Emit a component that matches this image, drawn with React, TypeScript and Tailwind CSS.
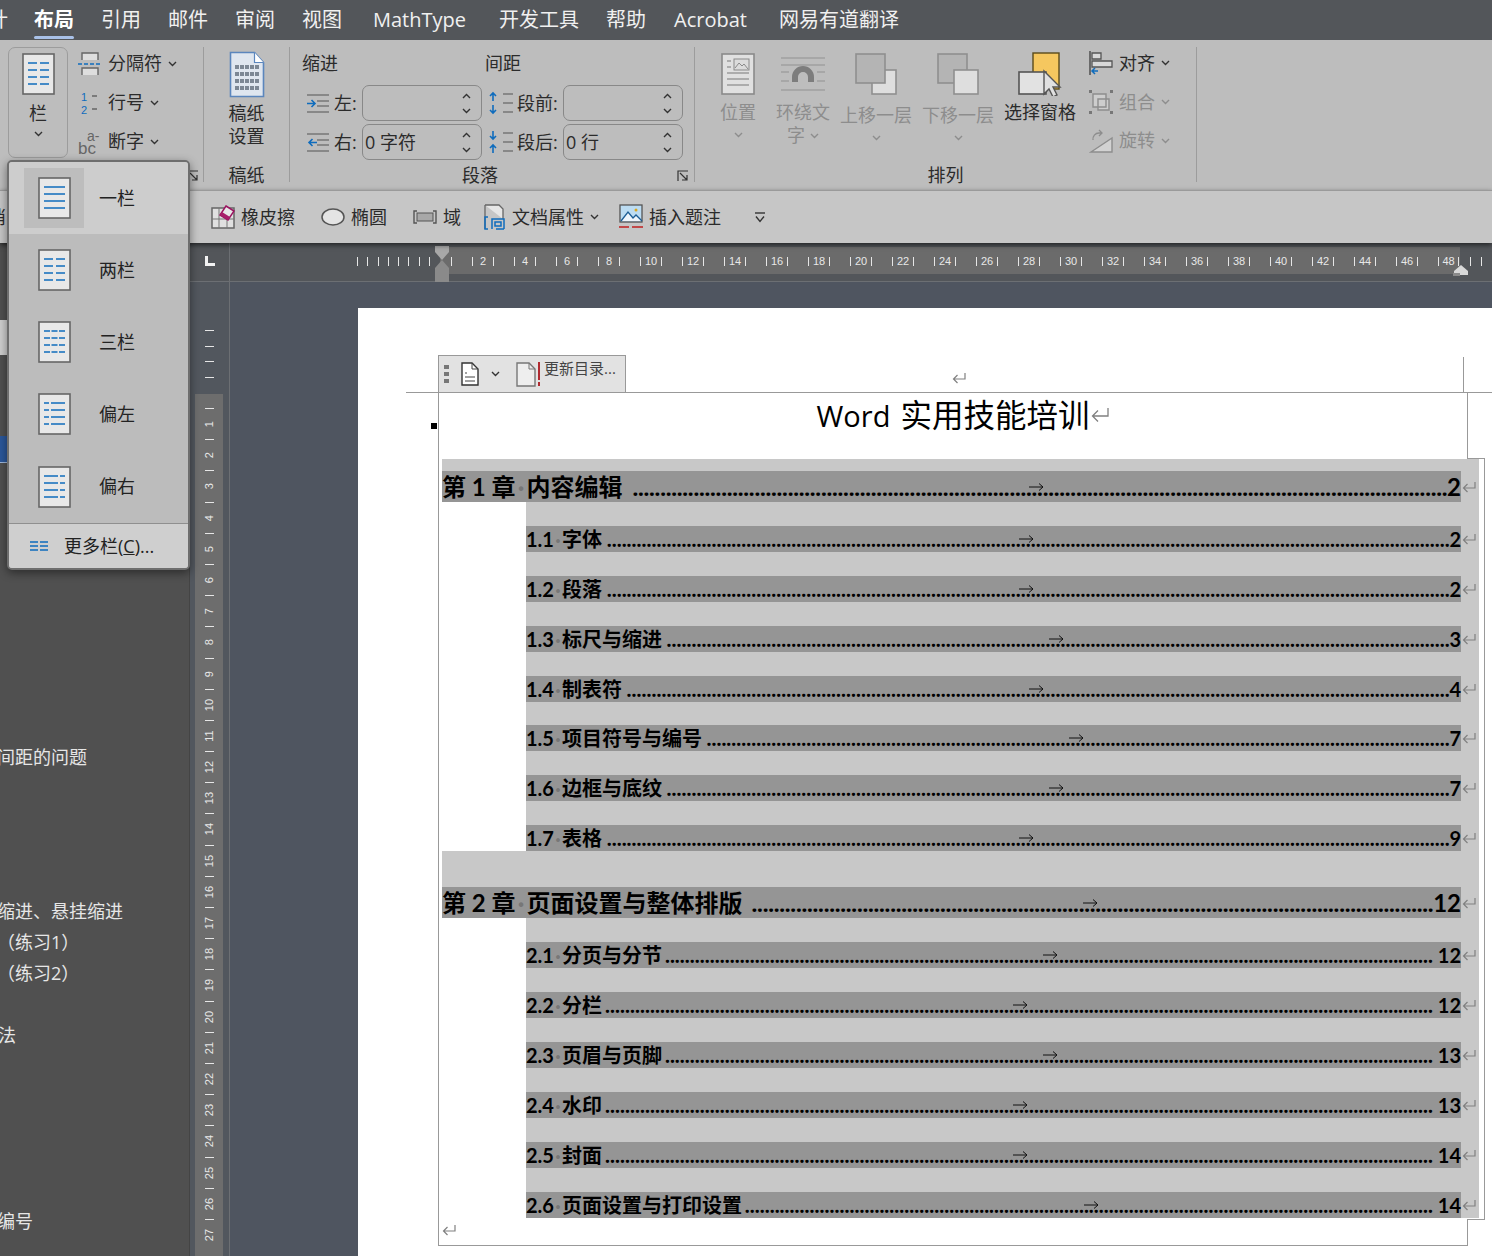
import type { ReactNode } from "react";

const sans = "font-['Open_Sans','Noto_Sans_CJK_SC',sans-serif]";

const TABS = [
  { t: "布局", c: "ml-[26px] font-bold text-white relative" },
  { t: "引用", c: "ml-[27px]" },
  { t: "邮件", c: "ml-[27px]" },
  { t: "审阅", c: "ml-[27px]" },
  { t: "视图", c: "ml-[27px]" },
  { t: "MathType", c: "ml-[31px]" },
  { t: "开发工具", c: "ml-[33px]" },
  { t: "帮助", c: "ml-[27px]" },
  { t: "Acrobat", c: "ml-[28px]" },
  { t: "网易有道翻译", c: "ml-[32px]" },
];

const TOC = [
  { ch: true, n: "第 1 章", t: "内容编辑", p: "2", arrow: 1029, pt: "pt-[12px]" },
  { n: "1.1", t: "字体", p: "2", arrow: 1019, pt: "pt-[24px]" },
  { n: "1.2", t: "段落", p: "2", arrow: 1019, pt: "pt-[24px]" },
  { n: "1.3", t: "标尺与缩进", p: "3", arrow: 1049, pt: "pt-[24px]" },
  { n: "1.4", t: "制表符", p: "4", arrow: 1029, pt: "pt-[24px]" },
  { n: "1.5", t: "项目符号与编号", p: "7", arrow: 1069, pt: "pt-[23px]" },
  { n: "1.6", t: "边框与底纹", p: "7", arrow: 1049, pt: "pt-[24px]" },
  { n: "1.7", t: "表格", p: "9", arrow: 1019, pt: "pt-[24px]" },
  { ch: true, n: "第 2 章", t: "页面设置与整体排版", p: "12", arrow: 1083, pt: "pt-[36px]" },
  { n: "2.1", t: "分页与分节", p: "12", arrow: 1043, pt: "pt-[24px]" },
  { n: "2.2", t: "分栏", p: "12", arrow: 1013, pt: "pt-[24px]" },
  { n: "2.3", t: "页眉与页脚", p: "13", arrow: 1043, pt: "pt-[24px]" },
  { n: "2.4", t: "水印", p: "13", arrow: 1013, pt: "pt-[24px]" },
  { n: "2.5", t: "封面", p: "14", arrow: 1013, pt: "pt-[24px]" },
  { n: "2.6", t: "页面设置与打印设置", p: "14", arrow: 1084, pt: "pt-[24px]" },
];

const BLUE = "#0f6cbd";

function Chevron({ up, color = "#333" }: { up?: boolean; color?: string }) {
  return (
    <svg width="9" height="6" viewBox="0 0 9 6" className="shrink-0">
      <path d={up ? "M1 5l3.5-3.5L8 5" : "M1 1l3.5 3.5L8 1"} fill="none" stroke={color} strokeWidth="1.4" />
    </svg>
  );
}

function ReturnMark({ className = "" }: { className?: string }) {
  return (
    <svg width="14" height="12" viewBox="0 0 14 12" className={className}>
      <path d="M13 1v6H1.5M5.5 3L1.5 7l4 4" fill="none" stroke="#808080" strokeWidth="1.2" />
    </svg>
  );
}

function ColIcon({ kind }: { kind: "one" | "two" | "three" | "left" | "right" }) {
  const cols: Record<string, number[][]> = {
    one: [[6, 27]],
    two: [[6, 15], [18, 27]],
    three: [[6, 12], [13.5, 19.5], [21, 27]],
    left: [[6, 11], [13, 27]],
    right: [[6, 20], [22, 27]],
  };
  return (
    <svg width="33" height="42" viewBox="0 0 33 42" className="shrink-0">
      <rect x="1" y="1" width="31" height="40" fill="#e8e8e8" stroke="#666" strokeWidth="1.6" />
      {[10, 17, 24, 31].map((y) =>
        cols[kind].map((c) => <line key={`${y}-${c[0]}`} x1={c[0]} x2={c[1]} y1={y} y2={y} stroke={BLUE} strokeWidth="1.5" />)
      )}
    </svg>
  );
}

function SmallRow({ icon, label, muted }: { icon: ReactNode; label: string; muted?: boolean }) {
  return (
    <div className={`flex h-[39px] items-center text-[18px] ${muted ? "text-[#8d8d8d]" : "text-[#2b2b2b]"}`}>
      <div className="flex w-[30px] shrink-0">{icon}</div>
      <span>{label}</span>
      <span className="ml-[6px]"><Chevron color={muted ? "#8d8d8d" : "#333"} /></span>
    </div>
  );
}

function BigButton({ w, icon, label, label2, muted, top }: { w: string; icon: ReactNode; label: string; label2?: string; muted?: boolean; top: string }) {
  const color = muted ? "#8d8d8d" : "#2b2b2b";
  return (
    <div className={`${w} flex shrink-0 flex-col items-center pt-[13px] text-[18px] leading-[23px]`} style={{ color }}>
      <div className="flex h-[42px] items-center justify-center">{icon}</div>
      <span className={`${top} whitespace-nowrap`}>{label}</span>
      {label2 !== undefined ? (
        <span className="flex items-center gap-[5px]">{label2}<Chevron color={color} /></span>
      ) : (
        <span className="mt-[8px] h-[9px]">{label === "选择窗格" ? null : <Chevron color={color} />}</span>
      )}
    </div>
  );
}

function GroupLabel({ children }: { children: ReactNode }) {
  return <div className="flex h-[30px] items-center justify-center text-[18px] text-[#2b2b2b]">{children}</div>;
}

function Divider() {
  return <div className="mt-[7px] h-[135px] w-px shrink-0 bg-[#9c9c9c]" />;
}

function Launcher({ className }: { className: string }) {
  return (
    <svg width="12" height="12" viewBox="0 0 12 12" className={`absolute ${className}`}>
      <path d="M1 11V1h10M3 3l7 7M10 5v5H5" fill="none" stroke="#333" strokeWidth="1.2" />
    </svg>
  );
}

function Spin({ value }: { value?: string }) {
  return (
    <div className="flex h-[36px] w-[120px] shrink-0 items-center justify-between rounded-[7px] border border-[#888] pr-[10px] pl-[2px] text-[18px] text-[#2b2b2b]">
      <span>{value}</span>
      <div className="flex flex-col gap-[9px]"><Chevron up /><Chevron /></div>
    </div>
  );
}

function IndentIcon({ flip }: { flip?: boolean }) {
  return (
    <svg width="24" height="21" viewBox="0 0 24 21">
      <path d="M1 2h22M11 8h12M11 13h12M1 19h22" stroke="#777" strokeWidth="1.3" />
      <path d={flip ? "M11 10.5H3M6.5 7l-3.5 3.5L6.5 14" : "M1 10.5h8M5.5 7L9 10.5 5.5 14"} fill="none" stroke={BLUE} strokeWidth="1.6" />
    </svg>
  );
}

function SpacingIcon({ flip }: { flip?: boolean }) {
  return (
    <svg width="26" height="24" viewBox="0 0 26 24">
      <path d="M15 3h10M15 12h10M15 21h10" stroke="#777" strokeWidth="1.3" />
      {flip ? (
        <path d="M5 1v8M2 6l3 3 3-3M5 23v-8M2 18l3-3 3 3" fill="none" stroke={BLUE} strokeWidth="1.6" />
      ) : (
        <path d="M5 10V2M2 5l3-3 3 3M5 14v8M2 19l3 3 3-3" fill="none" stroke={BLUE} strokeWidth="1.6" />
      )}
    </svg>
  );
}

function PaperIcon() {
  return (
    <svg width="36" height="47" viewBox="0 0 36 47">
      <path d="M1.5 1.5h24l9 10v34h-33z" fill="#dfe6ef" stroke="#5b86bd" strokeWidth="1.6" />
      <path d="M25.5 1.5v10h9" fill="#fff" stroke="#5b86bd" strokeWidth="1.2" />
      {[14, 21, 28, 35].map((y) => [5, 10, 15, 20, 25].map((x) => <rect key={`${x}-${y}`} x={x + 1} y={y} width="4" height="4" fill="#7c8794" />))}
    </svg>
  );
}

function Ruler() {
  const nums = Array.from({ length: 23 }, (_, i) => 2 + i * 2);
  const tick = <i className="block h-[9px] w-px shrink-0 bg-[#e6e6e6]" />;
  return (
    <div className="relative flex h-[39px] border-b border-[#6c6f73] bg-[#53565a]">
      <div className="flex w-[40px] shrink-0 items-center justify-center border-r border-[#6c6f73] pb-[3px]">
        <svg width="10" height="10" viewBox="0 0 10 10"><path d="M0 0h3v7h7v3H0z" fill="#f2f2f2" /></svg>
      </div>
      <div className="flex flex-1 items-start overflow-hidden pt-[4px]">
        <div className="ml-[127px] flex h-[27px] w-[83px] shrink-0 items-center justify-between pr-[10px] pt-[2px]">
          {Array.from({ length: 8 }).map((_, i) => <i key={i} className="block h-[9px] w-px bg-[#e6e6e6]" />)}
        </div>
        <div className="flex h-[27px] w-[1020px] shrink-0 items-center bg-[#6b6b6b] pt-[2px] font-['Liberation_Sans',sans-serif] text-[11px] text-[#e8e8e8]">
          <div className="ml-[11px] w-[11px]">{tick}</div>
          {nums.map((n) => (
            <div key={n} className="flex w-[42px] shrink-0 items-center justify-between px-[10px]">
              {tick}
              <span>{n}</span>
              {tick}
            </div>
          ))}
          <div className="flex w-[32px] shrink-0 items-center justify-between pl-[10px] pr-px">
            {tick}
            <span>48</span>
            {tick}
          </div>
        </div>
        <div className="flex h-[27px] items-center gap-[10px] pl-[10px] pt-[2px]">{tick}{tick}{tick}</div>
      </div>
      {/* indent markers sitting on the ruler */}
      <svg width="16" height="36" viewBox="0 0 16 36" className="absolute left-[244px] top-[3px]">
        <path d="M1 0h14v6l-7 8-7-8z" fill="#a8a8a8" />
        <path d="M8 14l7 8v6H1v-6z" fill="#8a8a8a" />
        <rect x="1" y="28" width="14" height="8" fill="#8a8a8a" />
      </svg>
      <svg width="16" height="11" viewBox="0 0 16 11" className="absolute left-[1263px] top-[22px]">
        <path d="M1 10V6l7-6 7 6v4z" fill="#d8d8d8" />
        <rect x="0" y="8" width="7" height="3" fill="#8a8a8a" />
      </svg>
    </div>
  );
}

function VerticalRuler() {
  const nums = Array.from({ length: 27 }, (_, i) => i + 1);
  return (
    <div className="flex w-[40px] shrink-0 flex-col border-r border-[#6c6f73] bg-[#52575e] pl-[5px] font-['Liberation_Sans',sans-serif] text-[11px] text-[#e8e8e8]">
      <div className="flex h-[112px] w-[28px] shrink-0 flex-col items-center gap-[14.6px] pt-[48px]">
        {[0, 1, 2, 3].map((i) => <i key={i} className="block h-px w-[9px] bg-[#e6e6e6]" />)}
      </div>
      <div className="w-[28px] flex-1 overflow-hidden bg-[#6d6d6d] pt-[14px]">
        {nums.map((n) => (
          <div key={n} className="flex h-[31.2px] shrink-0 flex-col items-center">
            <i className="block h-px w-[9px] bg-[#e6e6e6]" />
            <span className="flex flex-1 -rotate-90 items-center leading-none whitespace-nowrap">{n}</span>
          </div>
        ))}
      </div>
    </div>
  );
}

function TocRow({ item }: { item: (typeof TOC)[number] }) {
  const x0 = item.ch ? 442 : 526;
  // as many leader dots as fit between the title and the page number
  const labelW = item.ch ? 85 + 24 * item.t.length : 36 + 20 * item.t.length;
  const pageW = item.p.length * (item.ch ? 12 : 10) + (item.p.length > 1 && !item.ch ? 6 : 0);
  const period = item.ch ? 5.55 : 5;
  const dots = ".".repeat(Math.floor(((item.ch ? 1019 : 935) - labelW - pageW - (item.ch ? 6 : 2)) / period));
  return (
    <div className={`${item.pt} ${item.ch ? "ml-[3px] w-[1037px]" : "ml-[87px] w-[953px]"} flex bg-[#c8c8c8] text-black`}>
      <div className={`relative flex items-baseline ${item.ch ? "h-[31px] w-[1019px] text-[24px] leading-[31px]" : "h-[26px] w-[935px] text-[20px] leading-[26px]"} bg-[#959595] font-bold font-['Lato','Noto_Sans_CJK_SC',sans-serif]`}>
        <span className="whitespace-nowrap">{item.n}</span>
        <span className={`${item.ch ? "w-[11px]" : "w-[8px]"} shrink-0 text-center text-[#777]`}>·</span>
        <span className="whitespace-nowrap">{item.t}</span>
        <span className={`min-w-0 flex-1 text-right whitespace-nowrap font-['Open_Sans',sans-serif] ${item.ch ? "text-[22px] tracking-[-0.73px]" : "text-[19px] tracking-[-0.43px]"}`}>{dots}</span>
        <span className={item.p.length > 1 && !item.ch ? "ml-[5px]" : ""}>{item.p}</span>
        <svg width="15" height="9" viewBox="0 0 15 9" className="absolute top-1/2 -translate-y-1/2" style={{ left: item.arrow - x0 }}>
          <path d="M0 4.5h14M10 1l4 3.5L10 8" fill="none" stroke="#111" strokeWidth="1" />
        </svg>
      </div>
      <div className="flex flex-1 items-center"><ReturnMark className="ml-px" /></div>
    </div>
  );
}

function ColumnsMenu() {
  const rows: { k: "one" | "two" | "three" | "left" | "right"; t: string; h: string }[] = [
    { k: "one", t: "一栏", h: "h-[72px]" },
    { k: "two", t: "两栏", h: "h-[72px]" },
    { k: "three", t: "三栏", h: "h-[72px]" },
    { k: "left", t: "偏左", h: "h-[72px]" },
    { k: "right", t: "偏右", h: "h-[73px]" },
  ];
  return (
    <div className="absolute left-[7px] top-[160px] z-30 w-[183px] overflow-hidden rounded-[5px] border-2 border-[#6e6e6e] bg-[#bcbcbc] text-[18px] text-[#222] shadow-[0_3px_10px_rgba(0,0,0,0.45)]">
      {rows.map((r, i) => (
        <div key={r.k} className={`flex ${r.h} items-center pl-[15px] ${i === 0 ? "bg-[#cdcdcd]" : ""}`}>
          <div className={`flex h-[60px] w-[60px] items-center justify-center ${i === 0 ? "bg-[#bdbdbd]" : ""}`}><ColIcon kind={r.k} /></div>
          <span className="ml-[15px]">{r.t}</span>
        </div>
      ))}
      <div className="flex h-[45px] items-center border-t border-[#8f8f8f] bg-[#cfcfcf] pl-[21px]">
        <svg width="18" height="12" viewBox="0 0 18 12">
          <path d="M0 2h8M10 2h8M0 6h8M10 6h8M0 10h8M10 10h8" stroke={BLUE} strokeWidth="1.5" />
        </svg>
        <span className="ml-[16px]">更多栏(<u>C</u>)...</span>
      </div>
    </div>
  );
}

export default function App() {
  return (
    <div className={`relative flex h-[1256px] w-[1492px] flex-col overflow-hidden bg-[#505050] ${sans}`}>
      {/* tabs */}
      <div className="flex h-[40px] shrink-0 items-center overflow-hidden bg-[#53565a] text-[20px] whitespace-nowrap text-[#f0f0f0]">
        <span className="ml-[-12px]">计</span>
        {TABS.map((t) => (
          <span key={t.t} className={t.c}>
            {t.t}
            {t.t === "布局" && <i className="absolute -bottom-[4px] left-0 h-[3px] w-full rounded-full bg-[#a9c1e8]" />}
          </span>
        ))}
      </div>

      {/* ribbon */}
      <div className="flex h-[150px] shrink-0 bg-[#bdbdbd]">
        <div className="relative flex w-[203px] shrink-0 pl-[8px] pt-[7px]">
          <div className="flex h-[111px] w-[60px] flex-col items-center rounded-[7px] border border-[#9c9c9c] pt-[5px] text-[18px] text-[#2b2b2b]">
            <ColIcon kind="two" />
            <span className="mt-[5px] leading-[26px]">栏</span>
            <span className="mt-[5px]"><Chevron /></span>
          </div>
          <div className="ml-[10px] -mt-[3px] flex flex-col">
            <SmallRow label="分隔符" icon={
              <svg width="24" height="24" viewBox="0 0 24 24"><path d="M4 8V1h16v7M4 23v-7h16v7" fill="#dedede" stroke="#666" strokeWidth="1.4" /><path d="M0 12h24" stroke={BLUE} strokeWidth="1.6" strokeDasharray="4 2" /></svg>
            } />
            <SmallRow label="行号" icon={
              <svg width="24" height="24" viewBox="0 0 24 24"><text x="3" y="10" fontSize="11" fill={BLUE} fontFamily="Liberation Sans">1</text><text x="3" y="23" fontSize="11" fill={BLUE} fontFamily="Liberation Sans">2</text><path d="M14 5h5M14 18h5" stroke="#666" strokeWidth="1.3" /></svg>
            } />
            <SmallRow label="断字" icon={
              <svg width="24" height="24" viewBox="0 0 24 24" className="overflow-visible"><text x="9" y="11" fontSize="14" fill="#666" fontFamily="Liberation Sans">a-</text><text x="0" y="24" fontSize="17" fill="#666" fontFamily="Liberation Sans">bc</text></svg>
            } />
          </div>
        </div>
        <Divider />
        <div className="flex w-[85px] shrink-0 flex-col items-center">
          <div className="flex h-[120px] flex-col items-center pt-[11px] text-center text-[18px] leading-[23px] text-[#2b2b2b]">
            <PaperIcon />
            <span className="mt-[4px]">稿纸</span>
            <span>设置</span>
          </div>
          <GroupLabel>稿纸</GroupLabel>
        </div>
        <Divider />
        <div className="relative w-[404px] shrink-0">
          <div className="h-[120px] pl-[12px] text-[18px] text-[#2b2b2b]">
            <div className="flex h-[45px] items-center pt-[2px]">
              <span className="w-[183px]">缩进</span>
              <span>间距</span>
            </div>
            {[
              { l: "左:", a: undefined, s: "段前:", b: undefined, f: false },
              { l: "右:", a: "0 字符", s: "段后:", b: "0 行", f: true },
            ].map((r) => (
              <div key={r.l} className="mb-[3px] flex h-[36px] items-center">
                <span className="ml-[4px] flex w-[28px]"><IndentIcon flip={r.f} /></span>
                <span className="w-[28px]">{r.l}</span>
                <Spin value={r.a} />
                <span className="ml-[6px] flex w-[29px]"><SpacingIcon flip={r.f} /></span>
                <span className="w-[46px]">{r.s}</span>
                <Spin value={r.b} />
              </div>
            ))}
          </div>
          <GroupLabel><span className="-ml-[24px]">段落</span></GroupLabel>
          <Launcher className="right-[5px] top-[130px]" />
        </div>
        <Divider />
        <div className="w-[501px] shrink-0">
          <div className="flex h-[120px] pl-[13px]">
            <BigButton w="w-[60px]" muted top="mt-[6px]" label="位置" icon={
              <svg width="34" height="42" viewBox="0 0 34 42"><rect x="1" y="1" width="32" height="40" fill="#e0e0e0" stroke="#8a8a8a" strokeWidth="1.6" /><rect x="13" y="6" width="15" height="11" fill="#dcdcdc" stroke="#8a8a8a" /><path d="M14 15l4-5 3 3 2-2 4 5" fill="none" stroke="#8a8a8a" /><path d="M6 8h4M6 14h4M6 20h22M6 26h22M6 32h22" stroke="#9a9a9a" strokeWidth="1.3" /></svg>
            } />
            <BigButton w="w-[70px]" muted top="mt-[6px]" label="环绕文" label2="字" icon={
              <svg width="44" height="34" viewBox="0 0 44 34"><path d="M0 1h44M0 8h44M0 33h44M0 15h8M36 15h8M0 24h8M36 24h8" stroke="#a0a0a0" strokeWidth="1.3" /><path d="M11 25v-5a11 11 0 0122 0v5h-6v-5a5 5 0 00-10 0v5z" fill="#7d7d7d" /></svg>
            } />
            <BigButton w="w-[76px]" muted top="mt-[9px]" label="上移一层" icon={
              <svg width="42" height="42" viewBox="0 0 42 42"><rect x="17" y="17" width="24" height="24" fill="#dedede" stroke="#8f8f8f" strokeWidth="1.6" /><rect x="1" y="1" width="29" height="29" fill="#b4b4b4" stroke="#8f8f8f" strokeWidth="1.6" /></svg>
            } />
            <BigButton w="w-[88px]" muted top="mt-[9px]" label="下移一层" icon={
              <svg width="42" height="42" viewBox="0 0 42 42"><rect x="1" y="1" width="29" height="29" fill="#b4b4b4" stroke="#8f8f8f" strokeWidth="1.6" /><rect x="17" y="17" width="24" height="24" fill="#dedede" stroke="#8f8f8f" strokeWidth="1.6" /></svg>
            } />
            <BigButton w="w-[76px]" top="mt-[6px]" label="选择窗格" icon={
              <svg width="44" height="44" viewBox="0 0 44 44"><rect x="15" y="1" width="26" height="36" fill="#f5c75f" stroke="#5a4a1a" strokeWidth="1.4" /><rect x="1" y="20" width="27" height="22" fill="#e2e2e2" stroke="#555" strokeWidth="1.6" /><path d="M26 19v23l5-5 4 8 4-2-4-8h7z" fill="#e0e0e0" stroke="#555" strokeWidth="1.4" /></svg>
            } />
            <div className="ml-[11px] flex flex-col pt-[4px]">
              <SmallRow label="对齐" icon={
                <svg width="24" height="24" viewBox="0 0 24 24"><path d="M1 0v24" stroke="#555" strokeWidth="1.6" /><path d="M3 2h9v6H3zM3 10h20v6H3z" fill="#d8d8d8" stroke="#555" strokeWidth="1.3" /><path d="M9 20H3M6 17l-3 3 3 3" fill="none" stroke={BLUE} strokeWidth="1.5" /></svg>
              } />
              <SmallRow muted label="组合" icon={
                <svg width="24" height="24" viewBox="0 0 24 24"><path d="M4 4h13v13H4zM9 9h11v11H9z" fill="#cdcdcd" stroke="#8d8d8d" strokeWidth="1.4" /><path d="M0 0h3v3H0zM21 0h3v3h-3zM0 21h3v3H0zM21 21h3v3h-3z" fill="#777" /></svg>
              } />
              <SmallRow muted label="旋转" icon={
                <svg width="24" height="24" viewBox="0 0 24 24"><path d="M2 23L23 9v14z" fill="#d2d2d2" stroke="#8d8d8d" strokeWidth="1.4" /><path d="M4 11a6 6 0 016-7h3M10 1l3 3-3 3" fill="none" stroke="#8d8d8d" strokeWidth="1.3" /></svg>
              } />
            </div>
          </div>
          <GroupLabel>排列</GroupLabel>
        </div>
        <Divider />
      </div>

      {/* quick access strip */}
      <div className="relative z-10 flex h-[53px] shrink-0 items-center overflow-hidden border-t border-[#9a9a9a] bg-[#c6c6c6] text-[18px] whitespace-nowrap text-[#2b2b2b] shadow-[0_2px_5px_rgba(0,0,0,0.6)]">
        <span className="ml-[-12px]">消</span>
        <span className="ml-[205px] flex w-[30px]">
          <svg width="24" height="24" viewBox="0 0 24 24"><path d="M1 3h22v20H1z" fill="#e0e0e0" stroke="#666" strokeWidth="1.5" /><path d="M8 3v20M16 14v9M1 14h22" stroke="#777" /><path d="M15 1l8 5-6 9-8-5z" fill="#e7e7e7" stroke="#9b1260" strokeWidth="1.5" /><path d="M11 7l8 5-2 3-8-5z" fill="#a81f6a" /></svg>
        </span>
        <span>橡皮擦</span>
        <span className="ml-[26px] flex w-[30px]">
          <svg width="24" height="18" viewBox="0 0 24 18"><ellipse cx="12" cy="9" rx="11" ry="8" fill="#e4e4e4" stroke="#555" strokeWidth="1.5" /></svg>
        </span>
        <span>椭圆</span>
        <span className="ml-[26px] flex w-[30px]">
          <svg width="24" height="14" viewBox="0 0 24 14"><path d="M4 1H1v12h3M20 1h3v12h-3" fill="none" stroke="#555" strokeWidth="1.4" /><rect x="4" y="3" width="16" height="8" fill="#a8a8a8" stroke="#555" /></svg>
        </span>
        <span>域</span>
        <span className="ml-[23px] flex w-[28px]">
          <svg width="22" height="26" viewBox="0 0 22 26"><path d="M1 1h14l4 4v10" fill="#e6e6e6" stroke="#666" strokeWidth="1.3" /><path d="M1 1v24" stroke="#666" strokeWidth="1.3" /><path d="M4 13H1v12h3M20 25h-8M8 25V15h12v10M11 18h6v4h-6z" fill="none" stroke={BLUE} strokeWidth="1.5" /></svg>
        </span>
        <span>文档属性</span>
        <span className="ml-[6px]"><Chevron /></span>
        <span className="ml-[20px] flex w-[30px]">
          <svg width="24" height="26" viewBox="0 0 24 26"><rect x="1" y="1" width="22" height="17" fill="#bcdcf2" stroke="#555" strokeWidth="1.3" /><path d="M2 17l7-9 5 6 3-3 6 6" fill="#eef5fb" stroke="#1c5d94" strokeWidth="1.3" /><circle cx="17" cy="6" r="1.5" fill="#d9a520" /><path d="M0 23h10M13 23h11" stroke="#c02020" strokeWidth="1.6" /></svg>
        </span>
        <span>插入题注</span>
        <span className="ml-[34px]">
          <svg width="10" height="11" viewBox="0 0 10 11" className="block"><path d="M0 1h10" stroke="#333" strokeWidth="1.4" /><path d="M1 4.5l4 5 4-5" fill="none" stroke="#333" strokeWidth="1.4" /></svg>
        </span>
      </div>

      <div className="flex min-h-0 flex-1">
        {/* navigation pane, its left part is scrolled away */}
        <div className="flex w-[190px] shrink-0 flex-col overflow-hidden border-r border-[#444] bg-[#505050] text-[18px] leading-[31px] whitespace-nowrap text-[#e6e6e6]">
          <div className="mt-[77px] h-[35px] w-[7px] shrink-0 bg-[#cfcfcf]" />
          <div className="mt-[81px] h-[27px] w-[7px] shrink-0 border-b border-[#9fb8dc] bg-[#2b579a]" />
          <span className="-ml-[3px] mt-[279px]">间距的问题</span>
          <span className="-ml-[3px] mt-[123px]">缩进、悬挂缩进</span>
          <span className="-ml-[3px]">（练习1）</span>
          <span className="-ml-[3px]">（练习2）</span>
          <span className="-ml-[2px] mt-[31px]">法</span>
          <span className="-ml-[3px] mt-[155px]">编号</span>
        </div>

        <div className="flex min-w-0 flex-1 flex-col">
          <Ruler />
          <div className="flex min-h-0 flex-1">
            <VerticalRuler />
            <div className="min-w-0 flex-1 overflow-hidden bg-[#4f5560] pl-[128px] pt-[26px]">
              <div className="h-full bg-white">
                <div className="relative ml-[48px] h-[85px] border-b border-[#999]">
                  <div className="absolute bottom-0 left-[32px] flex h-[37px] w-[188px] items-center border border-b-0 border-[#999] bg-[#e2e2e2] text-[15px] text-[#444]">
                    <span className="ml-[5px] flex flex-col gap-[3px]">
                      <i className="block h-[4px] w-[5px] bg-[#777]" />
                      <i className="block h-[4px] w-[5px] bg-[#777]" />
                      <i className="block h-[4px] w-[5px] bg-[#777]" />
                    </span>
                    <svg width="18" height="24" viewBox="0 0 18 24" className="ml-[12px]"><path d="M1 1h10l6 6v16H1z" fill="#fff" stroke="#333" strokeWidth="1.4" /><path d="M11 1v6h6M4 11h2M4 15h10M4 19h10" fill="none" stroke="#444" /></svg>
                    <span className="ml-[12px]"><Chevron /></span>
                    <svg width="26" height="25" viewBox="0 0 26 25" className="ml-[16px]"><path d="M1 1h12l6 6v17H1z" fill="#eee" stroke="#777" strokeWidth="1.4" /><path d="M13 1v6h6" fill="none" stroke="#777" /><path d="M23 0v18M23 20v4" stroke="#b02a30" strokeWidth="2" /></svg>
                    <span className="ml-[2px] -mt-[12px] whitespace-nowrap">更新目录...</span>
                  </div>
                  <ReturnMark className="absolute left-[546px] top-[64px]" />
                  <i className="absolute left-[1057px] top-[49px] block h-[35px] w-px bg-[#999]" />
                </div>

                <div className="relative ml-[80px] h-[853px] w-[1030px] border-x border-b border-[#999]">
                  <i className="absolute -left-[8px] top-[30px] block h-[6px] w-[6px] bg-black" />
                  <div className="absolute -right-[18px] top-[65px] h-[762px] w-[18px] border-y border-r border-[#999] bg-white" />
                  <div className="flex h-[66px] items-start justify-center text-[31.5px] leading-[44px] text-black">
                    <span className="relative flex items-baseline whitespace-nowrap">
                      <span className="mr-[10px] text-[29px]">Word</span>
                      <span>实用技能培训</span>
                      <svg width="18" height="16" viewBox="0 0 18 16" className="absolute -right-[20px] top-[14px]"><path d="M17 1v8H1.5M7 3.5L1.5 9 7 14.5" fill="none" stroke="#808080" strokeWidth="1.3" /></svg>
                    </span>
                  </div>
                  <div className="relative">
                    {TOC.map((item) => <TocRow key={item.n} item={item} />)}
                  </div>
                  <ReturnMark className="ml-[3px] mt-[6px]" />
                </div>
              </div>
            </div>
          </div>
        </div>
      </div>

      <ColumnsMenu />
      <Launcher className="left-[187px] top-[170px] z-20" />
    </div>
  );
}
